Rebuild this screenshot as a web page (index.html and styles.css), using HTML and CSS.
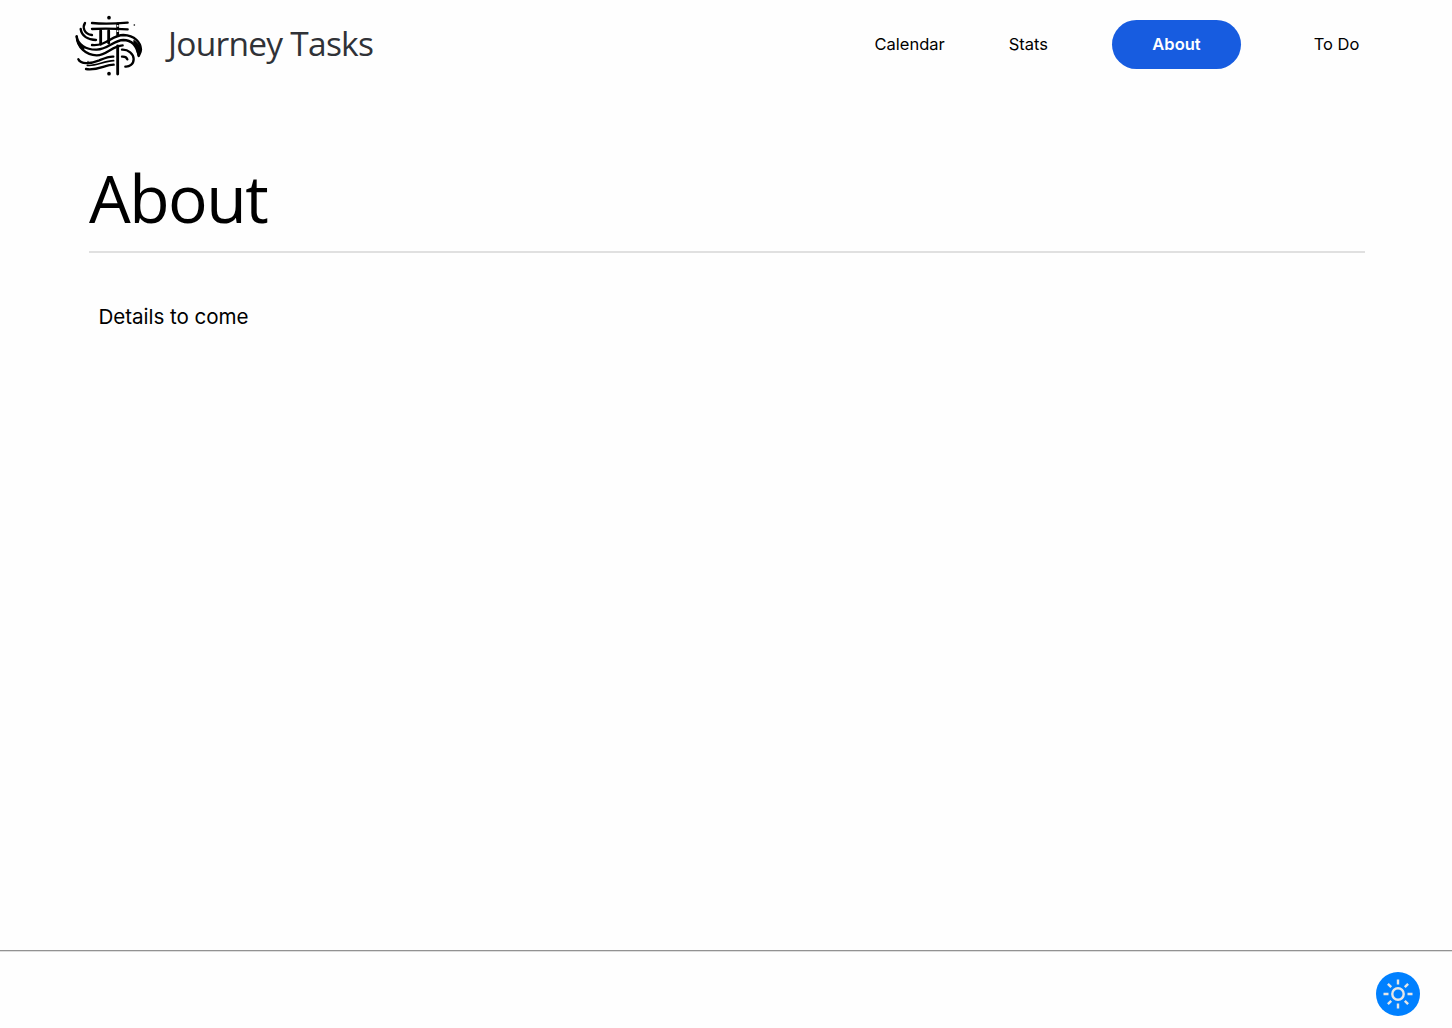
FILE: index.html
```html
<!DOCTYPE html>
<html lang="en">
<head>
<meta charset="utf-8">
<title>Journey Tasks</title>
<link rel="stylesheet" href="styles.css">
</head>
<body>
<header class="header">
  <a class="brand">
    <svg class="logo" viewBox="0 0 240 210" aria-hidden="true">
      <g class="logo-lines">
        <path d="M66 39Q110 43 173 38M66 57Q110 54 173 58"/>
        <path class="logo-post" d="M92 62V103M116 62V99M143 42V75M143 108V192"/>
        <path d="M45 39C37 51 41 72 66 75M32 57C35 78 54 90 78 90"/>
        <path d="M66 105C110 109 125 75 160 75C195 76 212 98 213 118C213 128 209 132 206 138C206 132 203 126 202 120"/>
        <path d="M20 79C23 103 48 120 80 119C115 118 130 91 160 90C184 90 199 103 206 136"/>
        <path d="M20 79C22 112 48 136 80 136C112 135 125 108 158 106"/>
        <path class="logo-fill" d="M20 79C22 94 31 105 44 112L40 121C27 111 19 97 20 79ZM192 91C205 99 213 111 213 120L206 138C204 121 200 109 190 101Z"/>
        <path d="M156 119C175 118 191 132 191 147C191 163 178 171 166 170M156 140Q169 139 172 148"/>
        <path d="M25 148C33 166 67 159 88 151C105 144 116 139 130 140M48 177C81 183 106 164 131 164"/>
        <path class="logo-fine" d="M52 166C74 170 102 153 131 152"/>
      </g>
      <circle cx="117" cy="23" r="5.5"/><circle cx="117" cy="191" r="5.5"/><circle cx="193" cy="45" r="2.5"/><circle cx="54" cy="154" r="2"/>
      <path class="logo-gap" d="M143 45V50M143 61V66"/>
    </svg>
    <span class="brand-name">Journey Tasks</span>
  </a>
  <nav class="nav">
    <a class="nav-link calendar">Calendar</a>
    <a class="nav-link stats">Stats</a>
    <a class="nav-link active">About</a>
    <a class="nav-link todo">To Do</a>
  </nav>
</header>
<main class="main">
  <h1 class="title">About</h1>
  <p class="details">Details to come</p>
</main>
<footer class="footer">
  <button class="theme" aria-label="Toggle theme">
    <svg class="sun" viewBox="0 0 30 30" aria-hidden="true">
      <circle cx="15" cy="15" r="5.7"/>
      <path d="M15 .5V5.5M15 24.5V29.5M.5 15H5.5M24.5 15H29.5M4.9 4.9L8.2 8.2M21.8 21.8L25.1 25.1M4.9 25.1L8.2 21.8M21.8 8.2L25.1 4.9"/>
    </svg>
  </button>
</footer>
</body>
</html>
```
FILE: styles.css
```css
* { box-sizing: border-box; }
body {
  margin: 0;
  height: 100vh;
  display: flex;
  flex-direction: column;
  background: #fefefe;
  color: #000;
  font-family: Inter, sans-serif;
}
.header {
  height: 90px;
  padding: 0 84px 0 70px;
  display: flex;
  justify-content: space-between;
  align-items: center;
}
.brand { display: flex; align-items: center; gap: 18px; }
.logo { width: 80px; height: 70px; }
.logo-lines { fill: none; stroke: currentColor; stroke-width: 7; stroke-linecap: round; stroke-linejoin: round; }
.logo-post { stroke-width: 8.5; }
.logo-fine { stroke-width: 5; }
.logo-fill { fill: currentColor; stroke-width: 2; }
.logo-gap { stroke: #fff; stroke-width: 5; }
.brand-name {
  padding-bottom: 5px;
  font: 400 33.5px/50px "Open Sans", sans-serif;
  letter-spacing: -.74px;
  color: #303237;
}
.nav { display: flex; align-items: center; padding-bottom: 2px; }
.nav-link { font-size: 16.5px; line-height: 49px; text-align: center; }
.calendar { margin-right: 64px; }
.stats { margin-right: 64px; }
.active {
  width: 129px;
  height: 49px;
  margin-right: 64px;
  border-radius: 25px;
  background: #175ce0;
  color: #fff;
  font-weight: 600;
}
.todo { width: 63px; }
.main { flex: 1; padding: 62px 87px 0 89px; }
.title {
  margin: 0;
  height: 101px;
  border-bottom: 2px solid #e0e0e0;
  font: 400 66px/90px "Open Sans", sans-serif;
  letter-spacing: -1.5px;
}
.details { margin: 51px 0 0 9.5px; font-size: 20.6px; line-height: 25px; letter-spacing: -.05px; }
.footer {
  height: 78px;
  padding: 21px 32px 0;
  border-top: 1px solid #929292;
  box-shadow: inset 0 1px #dedede;
  display: flex;
  justify-content: flex-end;
}
.theme {
  width: 44px;
  height: 44px;
  padding: 0;
  border: 0;
  border-radius: 50%;
  background: #0080ff;
  display: grid;
  place-items: center;
}
.sun { width: 30px; height: 30px; margin-bottom: 1px; fill: none; stroke: #e6e6e6; stroke-width: 2.4; }
```
